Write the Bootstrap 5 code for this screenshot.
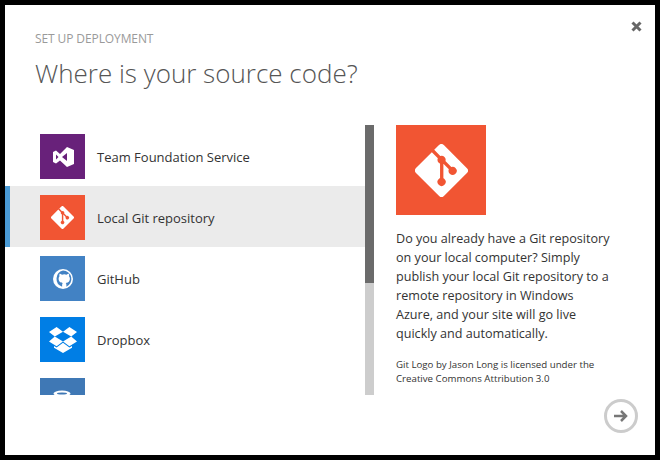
<!DOCTYPE html>
<html lang="en"><head><meta charset="utf-8">
<link href="https://cdn.jsdelivr.net/npm/bootstrap@5.3.0/dist/css/bootstrap.min.css" rel="stylesheet">
<style>
html,body{height:460px;overflow:hidden;background:#000}
body{padding:5px;font-family:"Open Sans","Noto Sans",sans-serif;color:#333}
.dialog{width:650px;height:450px;background:#fff;position:relative}
.head{padding:27px 0 0 30px}
.eyebrow{font-size:12px;line-height:14px;color:#9a9a9a;text-transform:uppercase;letter-spacing:-.1px}
.title{font-family:"Open Sans",sans-serif;font-weight:300;font-size:26px;line-height:38px;color:#555;margin:8px 0 0}
.body-row{margin-top:33px;height:270px}
.listing{width:360px;height:270px;overflow:hidden}
.entry{height:61px;padding:9px 0 7px 35px;font-size:13px;color:#333}
.entry.on{background:#ebebeb;box-shadow:inset 5px 0 0 #4a9bd6}
.entry-label{padding-top:2px}
.tile{width:45px;height:45px;flex:none;margin-right:12px}
.tile svg{display:block}
.t-vs{background:#68217a}
.t-git,.hero{background:#f15533}
.t-gh{background:#4282c4}
.t-db{background:#007ee5}
.t-sql{background:#3f78b5}
.rail{width:9px;height:270px;background:#cdcdcd;flex:none}
.thumb{height:158px;background:#6b6b6b}
.side{margin-left:22px;width:224px}
.hero{width:90px;height:90px}
.lede{font-size:12.6px;line-height:19px;margin:14px 0 0}
.fine{font-size:9.7px;line-height:14px;margin:15px 0 0}
.x{position:absolute;top:16px;right:13px;line-height:0}
.go{position:absolute;left:599px;top:394px;width:34px;height:34px;border:3px solid #ccc;border-radius:50%}
</style></head><body>
<div class="dialog">
 <div class="head">
  <div class="eyebrow">Set up deployment</div>
  <h1 class="title">Where is your source code?</h1>
 </div>
 <a class="x" href="#" aria-label="Close"><svg width="11" height="11" viewBox="0 0 11 11"><path d="M1.5 1.5l8 8M9.5 1.5l-8 8" stroke="#666" stroke-width="3"/></svg></a>
 <div class="d-flex body-row">
  <div class="listing">
   <div class="entry d-flex align-items-center"><div class="tile t-vs"><svg width="45" height="45" viewBox="0 0 45 45"><path fill="#fff" fill-rule="evenodd" d="M27 13l7 3v14l-7 3-7-6.500-4 3-3-1.500V18l3-1.500 4 3.500zM16 20.500v5l2.500-2.500zM27 19l-5 4 5 4z"/></svg></div><span class="entry-label">Team Foundation Service</span></div>
   <div class="entry on d-flex align-items-center"><div class="tile t-git d-flex align-items-center justify-content-center"><svg width="23" height="23" viewBox="0 0 92 92"><path fill="#fff" d="M90.156 41.965 50.036 1.848a5.918 5.918 0 0 0-8.372 0l-8.328 8.332 10.566 10.566a7.03 7.03 0 0 1 7.23 1.684 7.034 7.034 0 0 1 1.669 7.277l10.187 10.184a7.028 7.028 0 0 1 7.278 1.672 7.04 7.04 0 0 1 0 9.957 7.05 7.05 0 0 1-9.965 0 7.044 7.044 0 0 1-1.528-7.66l-9.5-9.497V59.36a7.04 7.04 0 0 1 1.86 1.325 7.04 7.04 0 0 1 0 9.957 7.04 7.04 0 0 1-9.957 0 7.04 7.04 0 0 1 0-9.957 7.06 7.06 0 0 1 2.304-1.538V34.01a7.06 7.06 0 0 1-2.304-1.539 7.04 7.04 0 0 1-1.516-7.7L29.242 14.356 1.73 41.865a5.92 5.92 0 0 0 0 8.372l40.12 40.117a5.92 5.92 0 0 0 8.37 0l39.936-39.934a5.92 5.92 0 0 0 0-8.455"/></svg></div><span class="entry-label">Local Git repository</span></div>
   <div class="entry d-flex align-items-center"><div class="tile t-gh d-flex align-items-center justify-content-center"><svg width="20" height="20" viewBox="0 0 16 16"><path fill="#fff" d="M8 0a8 8 0 1 0 0 16A8 8 0 0 0 8 0zm0 1.2a6.800 6.800 0 0 1 2.700 13V12.600c0-.7-.2-1.100-.5-1.400 1.700-.2 3.300-.9 3.300-3.600 0-.8-.3-1.400-.7-1.900.1-.2.300-1-.1-1.900 0 0-.6-.2-1.900.7a6.500 6.500 0 0 0-3.600 0C5.900 3.600 5.300 3.800 5.300 3.800c-.4.900-.2 1.700-.1 1.900-.4.500-.7 1.100-.7 1.900 0 2.700 1.600 3.400 3.300 3.600-.3.300-.5.700-.5 1.400v1.600A6.800 6.800 0 0 1 8 1.200z"/></svg></div><span class="entry-label">GitHub</span></div>
   <div class="entry d-flex align-items-center"><div class="tile t-db d-flex align-items-center justify-content-center"><svg width="28" height="26" viewBox="0 0 28 26"><path fill="#fff" d="M7.600 0 0 5l5.800 4.600L14 4.800zM20.400 0 14 4.800l8.200 4.800L28 5zM5.800 9.600 0 14.400l7.600 4.800L14 14.400zM22.200 9.600 14 14.400l6.400 4.800 7.600-4.800zM14 15.700l-6.400 4.800-2.600-1.600v1.800L14 26l9-5.300v-1.800l-2.600 1.600z"/></svg></div><span class="entry-label">Dropbox</span></div>
   <div class="entry d-flex align-items-center"><div class="tile t-sql"><svg width="45" height="45" viewBox="0 0 45 45"><ellipse cx="22" cy="15.500" rx="8.500" ry="3" fill="#fff"/><ellipse cx="22" cy="15.500" rx="5" ry="1" fill="#3f78b5"/><path fill="#fff" d="M13.500 17c2 2 15 2 17 0v14h-17z"/></svg></div></div>
  </div>
  <div class="rail"><div class="thumb"></div></div>
  <div class="side">
   <div class="hero d-flex align-items-center justify-content-center"><svg width="53" height="53" viewBox="0 0 92 92"><path fill="#fff" d="M90.156 41.965 50.036 1.848a5.918 5.918 0 0 0-8.372 0l-8.328 8.332 10.566 10.566a7.03 7.03 0 0 1 7.23 1.684 7.034 7.034 0 0 1 1.669 7.277l10.187 10.184a7.028 7.028 0 0 1 7.278 1.672 7.04 7.04 0 0 1 0 9.957 7.05 7.05 0 0 1-9.965 0 7.044 7.044 0 0 1-1.528-7.66l-9.5-9.497V59.36a7.04 7.04 0 0 1 1.86 1.325 7.04 7.04 0 0 1 0 9.957 7.04 7.04 0 0 1-9.957 0 7.04 7.04 0 0 1 0-9.957 7.06 7.06 0 0 1 2.304-1.538V34.01a7.06 7.06 0 0 1-2.304-1.539 7.04 7.04 0 0 1-1.516-7.7L29.242 14.356 1.73 41.865a5.92 5.92 0 0 0 0 8.372l40.12 40.117a5.92 5.92 0 0 0 8.37 0l39.936-39.934a5.92 5.92 0 0 0 0-8.455"/></svg></div>
   <p class="lede">Do you already have a Git repository<br>on your local computer? Simply<br>publish your local Git repository to a<br>remote repository in Windows<br>Azure, and your site will go live<br>quickly and automatically.</p>
   <p class="fine">Git Logo by Jason Long is licensed under the<br>Creative Commons Attribution 3.0</p>
  </div>
 </div>
 <a class="go d-flex align-items-center justify-content-center" href="#" aria-label="Next"><svg width="16" height="14" viewBox="0 0 16 14"><path fill="none" stroke="#777" stroke-width="2.500" d="M1 7h12M8 2l5 5-5 5"/></svg></a>
</div>
<script src="https://cdn.jsdelivr.net/npm/bootstrap@5.3.0/dist/js/bootstrap.bundle.min.js"></script>
</body></html>
